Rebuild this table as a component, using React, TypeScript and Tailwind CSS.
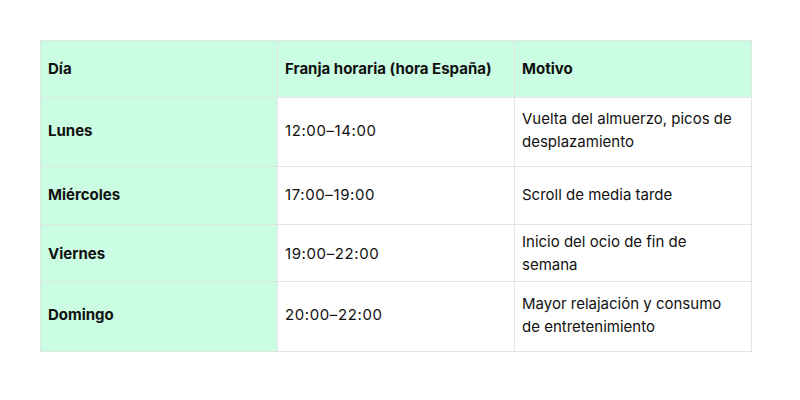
const rows = [
  { day: 'Lunes', time: '12:00–14:00', why: 'Vuelta del almuerzo, picos de desplazamiento', h: 'h-[68px] pb-[4px]' },
  { day: 'Miércoles', time: '17:00–19:00', why: 'Scroll de media tarde', h: 'h-[57px] pb-[2px]' },
  { day: 'Viernes', time: '19:00–22:00', why: 'Inicio del ocio de fin de semana', h: 'h-[56px]' },
  { day: 'Domingo', time: '20:00–22:00', why: 'Mayor relajación y consumo de entretenimiento', h: 'h-[69px] pb-[4px]' },
];

export default function App() {
  return (
    <div className="w-[800px] h-[400px] bg-white pt-[40px] pl-[40px] font-['Inter','Liberation_Sans',sans-serif] text-[15px] leading-[23px] text-[#111111]">
      <div className="grid w-[712px] grid-cols-[236px_236px_236px] gap-px bg-[#e4e4e4] p-px">
        {/* Header */}
        {['Día', 'Franja horaria (hora España)', 'Motivo'].map((t) => (
          <div key={t} className="h-[56px] flex items-center px-[7px] pb-[1px] bg-[#cafde1] font-bold">
            {t}
          </div>
        ))}

        {rows.map((r) => (
          <div key={r.day} className="contents">
            <div className={`${r.h} flex items-center px-[7px] bg-[#cafde1] font-bold`}>{r.day}</div>
            <div className={`${r.h} flex items-center px-[7px] bg-white tracking-[0.04em]`}>{r.time}</div>
            <div className={`${r.h} flex items-center px-[7px] pr-[12px] bg-white`}>{r.why}</div>
          </div>
        ))}
      </div>
    </div>
  );
}
